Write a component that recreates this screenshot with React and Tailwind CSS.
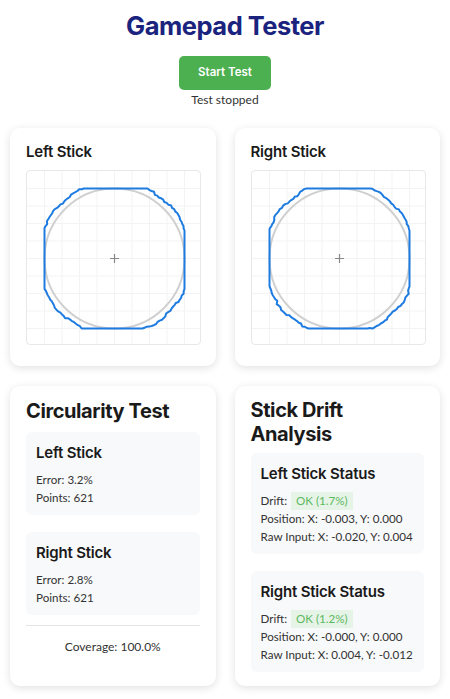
import React from 'react';

const font = { fontFamily: 'Lato, "Noto Sans", sans-serif' };
const head = { fontFamily: 'Inter, "Noto Sans", sans-serif' };

// deterministic jitter so the traces look hand-drawn
function tracePath(seed, wobble) {
  const pts = [];
  const n = 200;
  for (let i = 0; i <= n; i++) {
    const a = (i / n) * Math.PI * 2;
    const c = Math.cos(a);
    const s = Math.sin(a);
    const noise = i === n ? 0 : Math.sin(i * 12.9898 + seed * 78.233) * 43758.5453 % 1;
    const r = 76.5 + noise * wobble;
    let x = c * r;
    let y = s * r;
    x = Math.max(-70, Math.min(70, x));
    y = Math.max(-70, Math.min(70, y));
    pts.push(`${(87.5 + x).toFixed(1)},${(87.5 + y).toFixed(1)}`);
  }
  return 'M' + pts.join(' L') + ' Z';
}

function StickCanvas({ seed, wobble }) {
  const lines = [];
  for (let i = 1; i < 10; i++) {
    const p = i * 17.5;
    lines.push(<line key={'v' + i} x1={p} y1="0" x2={p} y2="175" stroke="#f3f3f3" strokeWidth="1" />);
    lines.push(<line key={'h' + i} x1="0" y1={p} x2="175" y2={p} stroke="#f3f3f3" strokeWidth="1" />);
  }
  return (
    <div className="w-[175px] h-[175px] rounded-[4px] border border-[#e8e8e8] bg-white overflow-hidden">
      <svg width="175" height="175" viewBox="0 0 175 175">
        {lines}
        <circle cx="87.5" cy="87.5" r="70" fill="none" stroke="#d0d0d0" strokeWidth="2" />
        <path d={tracePath(seed, wobble)} fill="none" stroke="#1e7be0" strokeWidth="2" strokeLinejoin="round" />
        <line x1="83" y1="87.5" x2="92" y2="87.5" stroke="#888" strokeWidth="1.2" />
        <line x1="87.5" y1="83" x2="87.5" y2="92" stroke="#888" strokeWidth="1.2" />
      </svg>
    </div>
  );
}

function Card({ children, className = '' }) {
  return (
    <div className={`bg-white rounded-[10px] shadow-[0_2px_8px_rgba(0,0,0,0.12)] px-4 ${className}`}>
      {children}
    </div>
  );
}

function InfoBox({ title, children }) {
  return (
    <div className="bg-[#f8f9fa] rounded-[6px] px-[10px] pt-[10px] pb-[8px]">
      <h3 style={head} className="text-[15px] font-semibold text-[#1a1a1a] leading-[22px] mb-[7px] tracking-[-0.2px]">{title}</h3>
      <div className="text-[11.6px] leading-[18px] text-[#333] whitespace-nowrap">{children}</div>
    </div>
  );
}

function Badge({ children }) {
  return (
    <span className="inline-block bg-[#e6f4e7] text-[#5cb860] px-[5px] ml-[1px] leading-[18px]">{children}</span>
  );
}

export default function App() {
  return (
    <div className="min-h-screen bg-white pb-[12px]" style={font}>
      <div className="flex flex-col items-center pt-[8px]">
        <h1 style={head} className="text-[25.5px] font-bold text-[#1a237e] leading-[36px] tracking-[-0.5px]">Gamepad Tester</h1>
        <button style={head} className="mt-[12px] w-[92px] h-[34px] rounded-[5px] bg-[#4caf50] text-white text-[11.5px] font-semibold">
          Start Test
        </button>
        <div className="mt-[1px] text-[12px] leading-[18px] text-[#333]">Test stopped</div>
      </div>

      <div className="grid grid-cols-2 gap-[19px] px-[10px] mt-[19px]">
        <Card className="pt-[13px] pb-[21px]">
          <h2 style={head} className="text-[15px] font-semibold text-[#1a1a1a] leading-[22px] mb-[7px] tracking-[-0.2px]">Left Stick</h2>
          <StickCanvas seed={1.3} wobble={1.2} />
        </Card>
        <Card className="pt-[13px] pb-[21px]">
          <h2 style={head} className="text-[15px] font-semibold text-[#1a1a1a] leading-[22px] mb-[7px] tracking-[-0.2px]">Right Stick</h2>
          <StickCanvas seed={4.1} wobble={1.4} />
        </Card>
      </div>

      <div className="grid grid-cols-2 gap-[19px] px-[10px] mt-[20px]">
        <Card className="pt-[12px] h-[300px]">
          <h2 style={head} className="text-[20px] font-bold text-[#1a1a1a] leading-[26px] mb-[8px] tracking-[-0.4px]">Circularity Test</h2>
          <div className="flex flex-col gap-[17px]">
            <InfoBox title="Left Stick">
              <div>Error: 3.2%</div>
              <div>Points: 621</div>
            </InfoBox>
            <InfoBox title="Right Stick">
              <div>Error: 2.8%</div>
              <div>Points: 621</div>
            </InfoBox>
          </div>
          <div className="border-t border-[#e5e5e5] mt-[10px] pt-[12px] text-center text-[12px] text-[#333] leading-[18px]">
            Coverage: 100.0%
          </div>
        </Card>
        <Card className="pt-[12px] h-[300px]">
          <h2 style={head} className="text-[20px] font-bold text-[#1a1a1a] leading-[24px] mb-[7px] tracking-[-0.4px]">Stick Drift Analysis</h2>
          <div className="flex flex-col gap-[17px]">
            <InfoBox title="Left Stick Status">
              <div>Drift: <Badge>OK (1.7%)</Badge></div>
              <div>Position: X: -0.003, Y: 0.000</div>
              <div>Raw Input: X: -0.020, Y: 0.004</div>
            </InfoBox>
            <InfoBox title="Right Stick Status">
              <div>Drift: <Badge>OK (1.2%)</Badge></div>
              <div>Position: X: -0.000, Y: 0.000</div>
              <div>Raw Input: X: 0.004, Y: -0.012</div>
            </InfoBox>
          </div>
        </Card>
      </div>
    </div>
  );
}
